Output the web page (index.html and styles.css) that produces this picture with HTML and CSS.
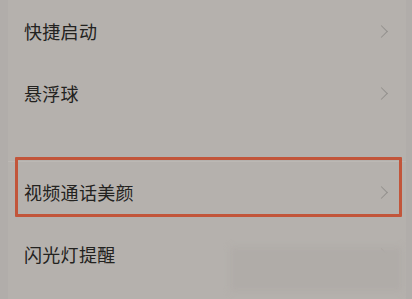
FILE: index.html
```html
<!DOCTYPE html>
<html lang="zh">
  <head>
    <meta charset="UTF-8" />
    <meta name="viewport" content="width=device-width, initial-scale=1.0" />
    <title>设置</title>
    <link rel="stylesheet" href="styles.css">
  </head>
  <body>
    <div class="page">
      <div class="group">
        <div class="row"><span class="label">快捷启动</span><span class="arrow"></span></div>
        <div class="row"><span class="label">悬浮球</span><span class="arrow"></span></div>
      </div>
      <div class="divider"></div>
      <div class="group">
        <div class="row"><span class="label">视频通话美颜</span><span class="arrow"></span></div>
        <div class="row"><span class="label">闪光灯提醒</span><span class="arrow"></span></div>
      </div>
      <div class="mark"></div>
      <div class="smudge"></div>
    </div>
  </body>
</html>
```

FILE: styles.css
```css
body {
  margin: 0;
  background-color: #b3afab;
  font-family: "Noto Sans CJK SC", "Noto Sans", sans-serif;
}

.page {
  position: relative;
  height: 299px;
  overflow: hidden;
  border-left: 8px solid #b1adaa;
  border-right: 6px solid #b1adaa;
  background-color: #b5b1ad;
}

.group {
  display: flex;
  flex-direction: column;
}

.row {
  height: 62px;
  display: flex;
  align-items: center;
  justify-content: space-between;
  padding: 0 18px 0 16px;
}

.label {
  font-size: 18px;
  color: #232220;
  letter-spacing: 0.3px;
}

.arrow {
  width: 8px;
  height: 8px;
  border-top: 1.5px solid #93908d;
  border-right: 1.5px solid #93908d;
  transform: rotate(45deg);
  margin-right: 2px;
}

.divider {
  height: 38px;
  border-bottom: 1px solid #bcb8b4;
  box-sizing: border-box;
  margin-bottom: -1px;
}

.mark {
  position: absolute;
  left: 7px;
  top: 157px;
  width: 381px;
  height: 54px;
  border: 3.5px solid #c2553a;
  border-radius: 1px;
}

.smudge {
  position: absolute;
  left: 222px;
  top: 247px;
  width: 172px;
  height: 44px;
  background-color: #b0aca8;
  filter: blur(3px);
}
```
